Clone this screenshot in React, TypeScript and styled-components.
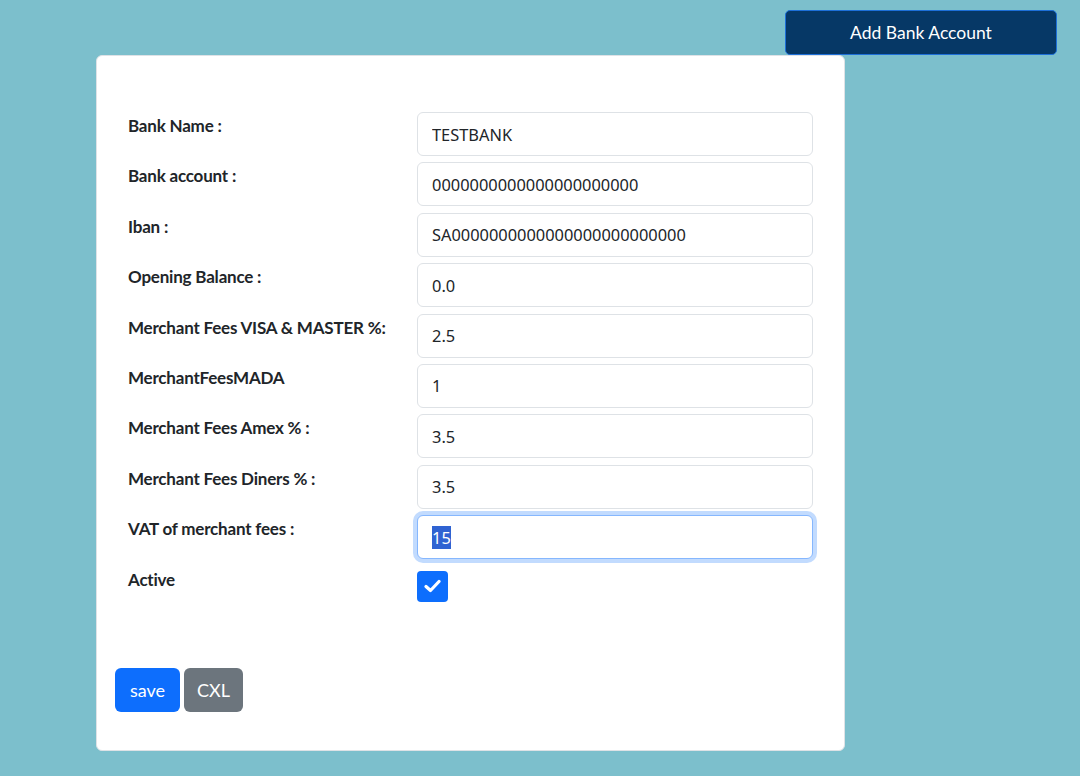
import React, { useEffect, useRef } from "react";
import styled, { createGlobalStyle } from "styled-components";

const Global = createGlobalStyle`
  html, body { margin: 0; padding: 0; }
  body {
    background: #7cbfcc;
    font-family: "Lato", "Noto Sans", sans-serif;
    min-height: 776px;
  }
  * { box-sizing: border-box; }
`;

const Page = styled.div`
  display: flex;
  flex-direction: column;
  padding: 10px 23px 24px 96px;
`;

const TopBar = styled.div`
  display: flex;
  justify-content: flex-end;
  height: 45px;
`;

const AddButton = styled.button`
  width: 272px;
  height: 45px;
  background: #063866;
  color: #fff;
  border: 1px solid #1d6fd8;
  border-radius: 5px;
  font-family: "Lato", sans-serif;
  font-size: 17.5px;
  cursor: pointer;
`;

const Card = styled.div`
  width: 749px;
  background: #fff;
  border: 1px solid #dee2e6;
  border-radius: 6px;
  padding: 56px 31px 38px 18px;
  display: flex;
  flex-direction: column;
`;

const Form = styled.div`
  display: flex;
  flex-direction: column;
  gap: 6.4px;
  padding-left: 13px;
`;

const Row = styled.div`
  display: grid;
  grid-template-columns: 289px 396px;
  align-items: start;
`;

const Label = styled.label`
  font-family: "Lato", sans-serif;
  font-weight: 700;
  font-size: 17px;
  color: #212529;
  padding-top: 3px;
  letter-spacing: -0.2px;
`;

const Input = styled.input<{ $focus?: boolean }>`
  width: 396px;
  height: 44px;
  padding: 0 14px;
  font-family: "Noto Sans", sans-serif;
  font-size: 16.4px;
  color: #212529;
  border: 1px solid ${(p) => (p.$focus ? "#86b7fe" : "#dee2e6")};
  border-radius: 6px;
  outline: none;
  box-shadow: ${(p) => (p.$focus ? "0 0 0 4px rgba(13,110,253,.25)" : "none")};
  &::selection { background: #2f63d2; color: #fff; }
`;

const Check = styled.span`
  display: inline-flex;
  align-items: center;
  justify-content: center;
  width: 31px;
  height: 31px;
  background: #0d6efd;
  border-radius: 4px;
  margin-top: 5px;
`;

const Actions = styled.div`
  display: flex;
  gap: 4px;
  margin-top: 66px;
`;

const Btn = styled.button<{ $variant: "primary" | "secondary"; $w: number }>`
  width: ${(p) => p.$w}px;
  height: 44px;
  padding: 0;
  border: none;
  border-radius: 6px;
  color: #fff;
  font-family: "Lato", sans-serif;
  font-size: 18px;
  background: ${(p) => (p.$variant === "primary" ? "#0d6efd" : "#6c757d")};
`;

const fields: { label: string; value: string }[] = [
  { label: "Bank Name :", value: "TESTBANK" },
  { label: "Bank account :", value: "0000000000000000000000" },
  { label: "Iban :", value: "SA0000000000000000000000000" },
  { label: "Opening Balance :", value: "0.0" },
  { label: "Merchant Fees VISA & MASTER %:", value: "2.5" },
  { label: "MerchantFeesMADA", value: "1" },
  { label: "Merchant Fees Amex % :", value: "3.5" },
  { label: "Merchant Fees Diners % :", value: "3.5" },
];

export default function App() {
  const ref = useRef<HTMLInputElement>(null);
  useEffect(() => {
    ref.current?.focus();
    ref.current?.select();
  }, []);
  return (
    <>
      <Global />
      <Page>
        <TopBar>
          <AddButton>Add Bank Account</AddButton>
        </TopBar>
        <Card>
          <Form>
            {fields.map((f) => (
              <Row key={f.label}>
                <Label>{f.label}</Label>
                <Input defaultValue={f.value} />
              </Row>
            ))}
            <Row>
              <Label>VAT of merchant fees :</Label>
              <Input ref={ref} $focus defaultValue="15" />
            </Row>
            <Row>
              <Label>Active</Label>
              <Check>
                <svg width="17" height="14" viewBox="0 0 17 14">
                  <path d="M2 7.5 L6.5 11.5 L15 2.5" stroke="#fff" strokeWidth="3.2" fill="none" strokeLinecap="round" strokeLinejoin="round" />
                </svg>
              </Check>
            </Row>
          </Form>
          <Actions>
            <Btn $variant="primary" $w={65}>save</Btn>
            <Btn $variant="secondary" $w={59}>CXL</Btn>
          </Actions>
        </Card>
      </Page>
    </>
  );
}
